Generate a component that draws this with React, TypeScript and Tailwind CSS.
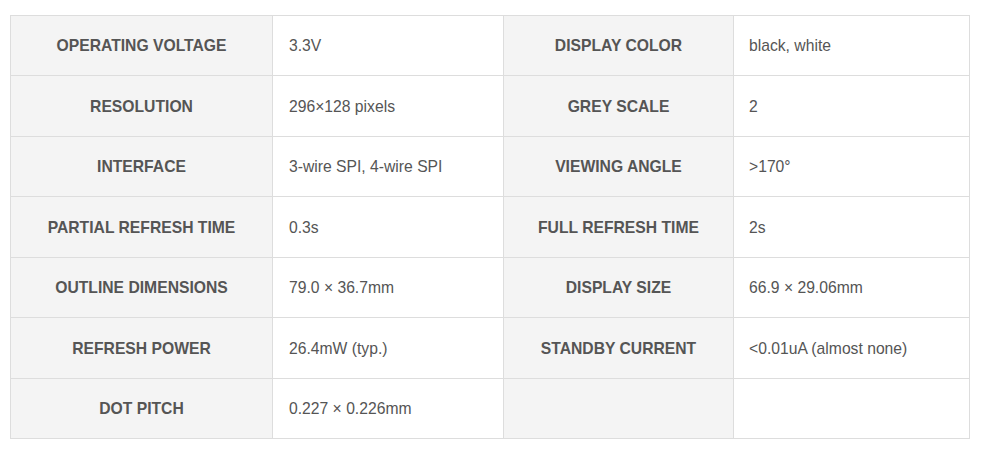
import React from "react";

const rows: [string, string, string, string][] = [
  ["OPERATING VOLTAGE", "3.3V", "DISPLAY COLOR", "black, white"],
  ["RESOLUTION", "296×128 pixels", "GREY SCALE", "2"],
  ["INTERFACE", "3-wire SPI, 4-wire SPI", "VIEWING ANGLE", ">170°"],
  ["PARTIAL REFRESH TIME", "0.3s", "FULL REFRESH TIME", "2s"],
  ["OUTLINE DIMENSIONS", "79.0 × 36.7mm", "DISPLAY SIZE", "66.9 × 29.06mm"],
  ["REFRESH POWER", "26.4mW (typ.)", "STANDBY CURRENT", "<0.01uA (almost none)"],
  ["DOT PITCH", "0.227 × 0.226mm", "", ""],
];

export default function App() {
  return (
    <div
      className="w-[982px] h-[453px] bg-white pt-[15px] pl-[10px]"
      style={{ fontFamily: '"Liberation Sans", Arial, sans-serif' }}
    >
      <table className="border-collapse w-[959px] table-fixed text-[15.7px] text-[#555]">
        <colgroup>
          <col className="w-[262px]" />
          <col className="w-[231px]" />
          <col className="w-[230px]" />
          <col className="w-[236px]" />
        </colgroup>
        <tbody>
          {rows.map((r, i) => (
            <tr key={i} className="h-[60.43px]">
              <td className="border border-[#dddddd] bg-[#f4f4f4] text-center font-bold p-0 pt-[1px]">{r[0]}</td>
              <td className="border border-[#dddddd] bg-white pl-[16px] p-0 pt-[1px]">{r[1]}</td>
              <td className="border border-[#dddddd] bg-[#f4f4f4] text-center font-bold p-0 pt-[1px]">{r[2]}</td>
              <td className="border border-[#dddddd] bg-white pl-[15px] p-0 pt-[1px]">{r[3]}</td>
            </tr>
          ))}
        </tbody>
      </table>
    </div>
  );
}
